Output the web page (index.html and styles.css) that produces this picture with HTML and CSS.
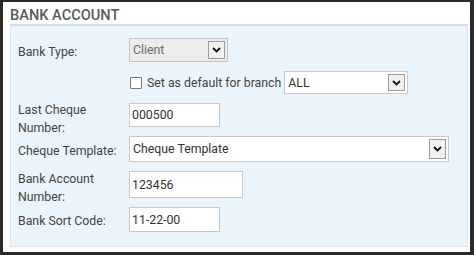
FILE: index.html
```html
<!DOCTYPE html>
<html>
<head>
<meta charset="utf-8">
<link rel="stylesheet" href="styles.css">
</head>
<body>
<div class="frame">
  <h2 class="title">BANK ACCOUNT</h2>
  <div class="panel">
    <div class="row">
      <div class="lbl"><span>Bank Type:</span></div>
      <div class="select sel-client disabled"><span class="val">Client</span><span class="arrow"><svg width="9" height="6" viewBox="0 0 9 6"><path d="M1 1 L4.5 4.5 L8 1" fill="none" stroke="#111" stroke-width="1.8"/></svg></span></div>
    </div>
    <div class="row">
      <div class="lbl"></div>
      <div class="check-wrap"><span class="checkbox"></span><span class="check-text">Set as default for branch</span></div>
      <div class="select sel-all"><span class="val">ALL</span><span class="arrow"><svg width="9" height="6" viewBox="0 0 9 6"><path d="M1 1 L4.5 4.5 L8 1" fill="none" stroke="#111" stroke-width="1.8"/></svg></span></div>
    </div>
    <div class="row">
      <div class="lbl two"><span>Last Cheque<br>Number:</span></div>
      <input class="field f-cheque" type="text" value="000500">
    </div>
    <div class="row">
      <div class="lbl"><span>Cheque Template:</span></div>
      <div class="select sel-template"><span class="val">Cheque Template</span><span class="arrow"><svg width="9" height="6" viewBox="0 0 9 6"><path d="M1 1 L4.5 4.5 L8 1" fill="none" stroke="#111" stroke-width="1.8"/></svg></span></div>
    </div>
    <div class="row">
      <div class="lbl two"><span>Bank Account<br>Number:</span></div>
      <input class="field f-account" type="text" value="123456">
    </div>
    <div class="row">
      <div class="lbl"><span>Bank Sort Code:</span></div>
      <input class="field f-sort" type="text" value="11-22-00">
    </div>
  </div>
</div>
</body>
</html>
```
FILE: styles.css
```css
html, body {
  margin: 0;
  padding: 0;
  background: #2a2a2a;
}
.frame {
  box-sizing: border-box;
  width: 474px;
  height: 255px;
  border-style: solid;
  border-color: #2a2a2a;
  border-width: 2px 4px 3px 3px;
  background: #ffffff;
  font-family: Roboto, "Liberation Sans", sans-serif;
}
.title {
  margin: 0;
  padding: 4px 0 0 7px;
  height: 18px;
  font-size: 14.6px;
  line-height: 18px;
  font-weight: 500;
  color: #5a5a5a;
}
.panel {
  margin: 0 2px 0 7px;
  border: 1px solid #d9e6ef;
  border-top: 2px solid #cfdeea;
  background: #eaf4fc;
  padding: 12px 0 14px 7px;
  display: flex;
  flex-direction: column;
  gap: 9px;
}
.row {
  display: flex;
  align-items: center;
}
.lbl {
  width: 111px;
  flex: none;
  height: 0;
  margin-top: 3px;
  display: flex;
  align-items: center;
  font-size: 12.3px;
  line-height: 18px;
  color: #444;
}
.lbl.two {
  margin-top: 7px;
}
.select {
  box-sizing: border-box;
  display: flex;
  align-items: center;
  border: 1px solid #c9c9c9;
  background: #fff;
  font-size: 12.3px;
  color: #333;
  padding-left: 3px;
}
.select .val {
  flex: 1;
}
.select .arrow {
  box-sizing: border-box;
  flex: none;
  width: 17px;
  height: calc(100% - 4px);
  margin-right: 2px;
  border: 1px solid #9c9c9c;
  background: #f0f0f0;
  display: flex;
  align-items: center;
  justify-content: center;
}
.select .arrow svg {
  display: block;
}
.select.disabled {
  background: #ececec;
  color: #6a6a6a;
  border-color: #c4c4c4;
}
.sel-client {
  width: 99px;
  height: 24px;
}
.sel-all {
  width: 124px;
  height: 23px;
  margin-left: 3px;
}
.sel-template {
  width: 320px;
  height: 26px;
}
.check-wrap {
  display: flex;
  align-items: center;
  gap: 5px;
  font-size: 12.3px;
  color: #444;
  margin-left: 1px;
}
.checkbox {
  box-sizing: border-box;
  width: 12px;
  height: 12px;
  border: 1px solid #7d7d7d;
  background: #fff;
  border-radius: 1px;
}
.field {
  box-sizing: border-box;
  margin: 0;
  border: 1px solid #c9c9c9;
  background: #fff;
  font-family: Roboto, "Liberation Sans", sans-serif;
  font-size: 12.3px;
  color: #333;
  padding: 0 0 0 2px;
  outline: none;
}
.f-cheque {
  width: 91px;
  height: 24px;
}
.f-account {
  width: 114px;
  height: 27px;
}
.f-sort {
  width: 91px;
  height: 25px;
}
```
